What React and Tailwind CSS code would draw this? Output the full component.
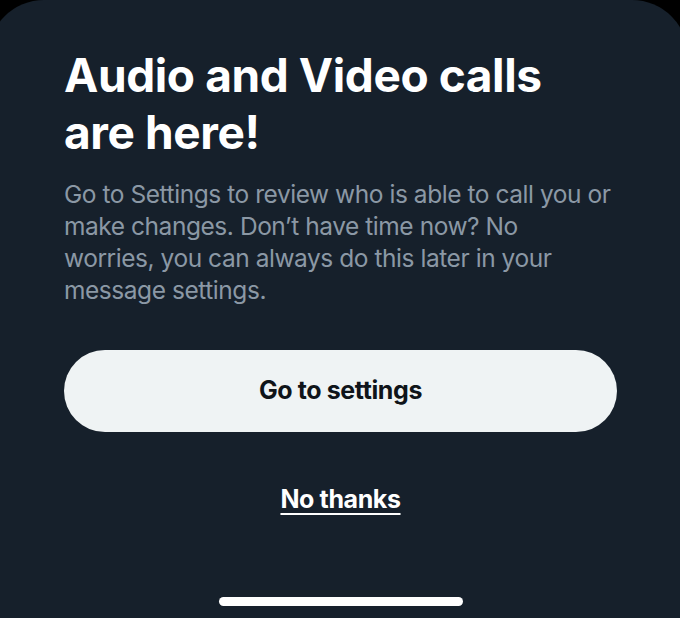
export default function App() {
  return (
    <div className="h-[618px] w-[680px] overflow-hidden bg-black">
      <div className="-ml-[12px] -mr-[8px] flex h-[630px] flex-col rounded-t-[56px] bg-[#16202b] pl-[76px] pr-[68px] font-['Inter',sans-serif]">
        <h1 className="mt-[47px] text-[46px] font-bold leading-[57px] tracking-[-0.4px] text-white">
          Audio and Video calls
          <br />
          are here!
        </h1>
        <p className="mt-[17px] w-[560px] text-[24.5px] leading-[32px] tracking-[-0.45px] text-[#8b98a5]">
          Go to Settings to review who is able to call you or
          <br />
          make changes. Don’t have time now? No
          <br />
          worries, you can always do this later in your
          <br />
          message settings.
        </p>
        <button className="mt-[44px] flex h-[82px] w-[553px] items-center justify-center rounded-full bg-[#eff3f4] text-[25px] font-bold tracking-[-0.4px] text-[#0f1419]">
          Go to settings
        </button>
        <button className="mt-[49px] w-[553px] text-center text-[25px] font-bold tracking-[-0.4px] text-white">
          <span className="underline decoration-2 underline-offset-[5px]">No thanks</span>
        </button>
        <div className="mt-[auto] mb-[24px] flex w-[553px] justify-center">
          <div className="h-[9px] w-[244px] rounded-full bg-white" />
        </div>
      </div>
    </div>
  )
}
